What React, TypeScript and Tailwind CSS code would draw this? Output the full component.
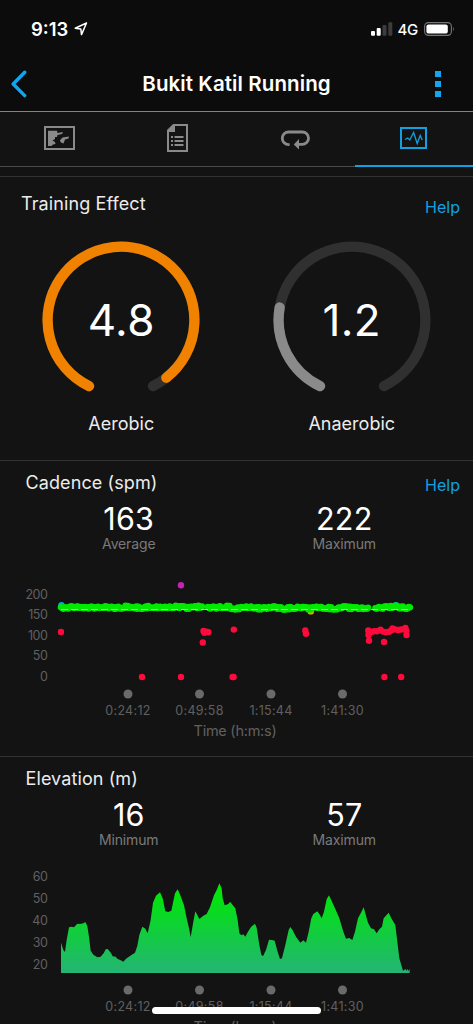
import { ReactNode } from 'react';

interface Point {
  x: number;
  y: number;
  color?: string;
}

interface StatProps {
  value: string;
  label: string;
}

const RED = '#ff0a3c';

const cadencePoints: Point[] = [
  { x: 61, y: 62 },
  { x: 142, y: 107 },
  { x: 181, y: 107 },
  { x: 203.5, y: 61 },
  { x: 204.5, y: 62.8 },
  { x: 206.5, y: 61.8 },
  { x: 208.3, y: 62.3 },
  { x: 202.8, y: 72.5 },
  { x: 233.8, y: 59.6 },
  { x: 232.6, y: 107 },
  { x: 233.6, y: 107 },
  { x: 305.3, y: 60.5 },
  { x: 306, y: 63.8 },
  { x: 368.3, y: 60.4 },
  { x: 368.5, y: 65 },
  { x: 369, y: 70.8 },
  { x: 371, y: 62 },
  { x: 374, y: 61.3 },
  { x: 377, y: 61.3 },
  { x: 380.5, y: 59.8 },
  { x: 383, y: 61.6 },
  { x: 386, y: 62.2 },
  { x: 389, y: 61.8 },
  { x: 391, y: 60.6 },
  { x: 392.6, y: 58.4 },
  { x: 395, y: 59.4 },
  { x: 398, y: 60 },
  { x: 401, y: 59.5 },
  { x: 405.4, y: 58 },
  { x: 406.4, y: 61 },
  { x: 406.5, y: 65 },
  { x: 384, y: 72 },
  { x: 384.4, y: 107 },
  { x: 401.2, y: 107 },
  { x: 181, y: 15.3, color: '#c822b4' },
  { x: 61.5, y: 35.2, color: '#00a8e8' },
  { x: 396, y: 35.3, color: '#00a8e8' },
  { x: 310.8, y: 41.4, color: '#ff9a00' },
];

// Steady running band, one sample every ~1.2px, with the two short pauses left out
const runningPoints: Point[] = Array.from({ length: 293 }, (_, i) => {
  const x = 61 + i * 1.195;
  const drift = x > 230 && x < 372 ? 37.9 : 37.3;
  const y = drift + Math.sin(i * i * 0.37) * 1.1 + Math.sin(i * 0.31) * 0.5;
  return { x, y };
}).filter(({ x }) => !(x > 202.5 && x < 207.8) && !(x > 368.3 && x < 374.2));

const elevationPath =
  'M183 669 L183 578 190 600 195 606 200 570 207 532 215 530 222 532 232 521 240 522 250 520 256 516 262 528 ' +
  '267 560 272 602 280 614 292 622 302 620 312 608 317 598 323 597 333 609 338 619 347 620 352 626 362 631 370 635 ' +
  '378 626 390 618 405 608 412 588 418 555 427 530 436 536 443 550 452 510 459 458 468 437 480 427 488 445 ' +
  '496 484 505 486 514 482 525 430 533 418 541 436 552 466 560 505 567 535 572 562 580 515 586 484 598 507 ' +
  '610 497 620 492 630 472 642 436 650 420 658 400 665 415 668 445 674 466 685 462 690 455 698 465 706 475 ' +
  '708 485 713 510 718 550 724 556 730 553 736 560 744 545 753 531 765 521 770 533 778 585 784 614 789 619 ' +
  '798 600 807 569 816 570 824 572 832 602 840 627 846 625 856 585 866 540 871 531 878 541 888 560 901 578 ' +
  '910 571 918 578 926 545 934 505 940 492 952 484 958 492 965 505 972 485 980 448 987 436 995 453 1006 477 ' +
  '1018 505 1030 545 1038 566 1048 564 1057 570 1065 545 1074 505 1083 488 1091 472 1098 497 1104 518 1113 535 ' +
  '1122 538 1130 550 1138 538 1146 530 1151 505 1166 488 1174 505 1186 525 1192 575 1198 625 1209 662 1213 660 ' +
  '1216 656 1219 663 1222 657 1226 663 1229 656 L1229 669 Z';

const timeTicks = [
  { x: 128, label: '0:24:12' },
  { x: 199.5, label: '0:49:58' },
  { x: 271, label: '1:15:44' },
  { x: 342.5, label: '1:41:30' },
];

// Angle is measured clockwise from the bottom of the circle
function pointAt(angle: number) {
  const rad = (angle * Math.PI) / 180;
  return `${79 - 73.4 * Math.sin(rad)} ${79 + 73.4 * Math.cos(rad)}`;
}

function arc(from: number, to: number) {
  return `M${pointAt(from)} A73.4 73.4 0 ${to - from > 180 ? 1 : 0} 1 ${pointAt(to)}`;
}

function Gauge({ value, label, color }: { value: number; label: string; color: string }) {
  const start = 25.8;
  const sweep = 308.4;

  return (
    <div className="flex flex-col items-center">
      <div className="grid h-[158px] w-[158px] place-items-center">
        <svg viewBox="0 0 158 158" className="col-start-1 row-start-1 h-[158px] w-[158px]" fill="none" strokeLinecap="round" strokeWidth="10.3">
          <path d={arc(start, start + sweep)} stroke="#303030" />
          <path d={arc(start, start + (sweep * value) / 5)} stroke={color} />
        </svg>
        <span className="col-start-1 row-start-1 text-[44px] leading-none tracking-[0.4px] text-white">{value.toFixed(1)}</span>
      </div>
      <span className="mt-[13px] text-[18px] leading-6">{label}</span>
    </div>
  );
}

function Stat({ value, label }: StatProps) {
  return (
    <div className="flex flex-col items-center">
      <span className="mt-px text-[30.5px] leading-8 tracking-[0.2px] text-white">{value}</span>
      <span className="mt-px text-[14px] leading-4 tracking-[-0.15px] text-[#7a7a7a]">{label}</span>
    </div>
  );
}

function TimeAxis() {
  return (
    <g fill="#606060" textAnchor="middle">
      {timeTicks.map((tick) => (
        <g key={tick.label}>
          <circle cx={tick.x} cy="124" r="4.5" fill="#6a6a6a" />
          <text x={tick.x} y="144.8" fontSize="12.5" letterSpacing="0.3">{tick.label}</text>
        </g>
      ))}
      <text x="235" y="165.8" fontSize="14.5" letterSpacing="-0.25">Time (h:m:s)</text>
    </g>
  );
}

function YAxis({ labels, first, step }: { labels: number[]; first: number; step: number }) {
  return (
    <g fill="#606060" textAnchor="end" fontSize="12.5" letterSpacing="-0.5">
      {labels.map((label, i) => (
        <text key={label} x="47.3" y={first + i * step + 4.5}>{label}</text>
      ))}
    </g>
  );
}

interface ChartSectionProps {
  title: string;
  stats: StatProps[];
  help?: boolean;
  children: ReactNode;
}

function ChartSection({ title, stats, help = false, children }: ChartSectionProps) {
  return (
    <section className="h-[296px] shrink-0 border-t border-[#333]">
      <div className="flex h-[41px] items-start justify-between pl-[25.5px] pr-[13px] pt-2.5">
        <h2 className="text-[18px] leading-6 tracking-[0.1px]">{title}</h2>
        {help && <button className="mt-[2px] text-[16px] leading-6 text-[#11a0e0]">Help</button>}
      </div>
      <div className="grid h-[68px] grid-cols-2 px-[21px]">
        {stats.map((stat) => (
          <Stat key={stat.label} {...stat} />
        ))}
      </div>
      <svg width="473" height="186" viewBox="0 0 473 186" className="block">
        {children}
        <TimeAxis />
      </svg>
    </section>
  );
}

function StatusBar() {
  return (
    <div className="flex h-[56px] items-center justify-between pl-[31px] pr-[18px] pt-0.5 text-white">
      <div className="flex items-center gap-1.5">
        <span className="text-[18.5px] font-semibold leading-6">9:13</span>
        <svg width="14" height="14" viewBox="0 0 14 14" fill="none" stroke="white" strokeWidth="1.5" strokeLinejoin="round">
          <path d="M12.5 1 L1.2 6.2 L6.8 6.9 L7.5 12.6 Z" />
        </svg>
      </div>
      <div className="flex items-center">
        <svg width="22" height="14" viewBox="0 0 22 14">
          <rect x="0" y="9" width="4" height="4.7" rx="1" fill="white" />
          <rect x="5.7" y="6" width="4" height="7.7" rx="1" fill="white" />
          <rect x="11.5" y="3" width="4" height="10.7" rx="1" fill="#3c3c3c" />
          <rect x="17.3" y="0.3" width="4" height="13.4" rx="1" fill="#3c3c3c" />
        </svg>
        <span className="ml-[5px] mr-1.5 mt-0.5 text-[15px] font-medium leading-5 tracking-[-0.3px]">4G</span>
        <svg width="31" height="14" viewBox="0 0 31 14">
          <rect x="0.6" y="0.6" width="26.8" height="12.8" rx="3.8" fill="none" stroke="#777" strokeWidth="1.1" />
          <rect x="2.4" y="2.4" width="21.4" height="9.2" rx="2.2" fill="white" />
          <path d="M29 4.8 Q30.8 7 29 9.2 Z" fill="#777" />
        </svg>
      </div>
    </div>
  );
}

function TabBar() {
  return (
    <nav className="grid h-[55px] shrink-0 grid-cols-4">
      <button className="flex items-start justify-center border-b border-[#4a4a4a] pt-[14px]">
        <svg width="31" height="24" viewBox="0 0 31 24">
          <rect x="1" y="1" width="29" height="22" fill="none" stroke="#8a8a8a" strokeWidth="2" />
          <path fill="#8a8a8a" d="M4 4.7 H13 L13.5 7 L19 6 L18 8 L13.5 9 L13 11 H11 V13 L8.5 14.5 L11 16 L11.5 18 L9 18.5 L7.5 20 H4 Z M25 10.5 L24.5 12.5 L21 13.5 L19.5 17.5 L17 16.5 L15.8 14.5 L18.5 11.5 Z" />
        </svg>
      </button>
      <button className="flex items-start justify-center border-b border-[#4a4a4a] pt-3">
        <svg width="21" height="28" viewBox="0 0 21 28">
          <path fill="none" stroke="#8a8a8a" strokeWidth="2" d="M6.5 1 H20 V27 H1 V6.5 Z" />
          <path fill="#8a8a8a" d="M1 7 L7 1 H8 V8 H1 Z M4 12 h2 v2 h-2 Z M4 16 h2 v2 h-2 Z M4 20 h2 v2 h-2 Z M7.5 12 h9 v2 h-9 Z M7.5 16 h9 v2 h-9 Z M7.5 20 h9 v2 h-9 Z" />
        </svg>
      </button>
      <button className="flex items-start justify-center border-b border-[#4a4a4a] pt-[18px]">
        <svg width="29" height="20" viewBox="0 0 29 20">
          <path fill="none" stroke="#8a8a8a" strokeWidth="2.8" d="M8.6 14.6 H7.6 A6.1 6.1 0 0 1 7.6 2 H21.3 A6.1 6.1 0 0 1 21.3 14.4 H17" />
          <path fill="#8a8a8a" d="M12.8 14.4 L18 9 V19.6 Z" />
        </svg>
      </button>
      <button className="flex items-start justify-center border-b-2 border-[#11a0e0] pt-[15px]">
        <svg width="27" height="22" viewBox="0 0 27 22" fill="none" stroke="#11a0e0">
          <rect x="1" y="1" width="25" height="20" strokeWidth="2" />
          <path d="M5 12.5 L7.8 11 L9.8 13 L13.6 5.5 L17.2 16.5 L20.2 8.5 L22.3 13" strokeWidth="1.3" />
        </svg>
      </button>
    </nav>
  );
}

export default function App() {
  return (
    <main className="relative flex h-[1024px] w-[473px] flex-col overflow-hidden bg-[#131313] font-['Inter','Liberation_Sans',sans-serif] text-[#ececec]">
      <header className="h-[111px] shrink-0 bg-[#0c0c0c]">
        <StatusBar />
        <div className="grid h-[55px] grid-cols-[1fr_auto_1fr] items-center pl-[11px] pr-[11px]">
          <svg width="16" height="28" viewBox="0 0 16 28" fill="none" stroke="#11a7f0" strokeWidth="3.4" strokeLinecap="round" strokeLinejoin="round">
            <path d="M13.7 2.2 L2.2 14 L13.7 25.6" />
          </svg>
          <h1 className="text-[20.5px] font-semibold leading-6 tracking-[0.1px] text-white">Bukit Katil Running</h1>
          <svg width="6" height="26" viewBox="0 0 6 26" fill="#11a7f0" className="mr-[21px] justify-self-end">
            <rect y="0" width="6" height="6" />
            <rect y="10" width="6" height="6" />
            <rect y="20" width="6" height="6" />
          </svg>
        </div>
      </header>
      <div className="h-px shrink-0 bg-[#11a7f0]" />

      <TabBar />

      <section className="mt-[9px] h-[284px] shrink-0 border-t border-[#333]">
        <div className="flex h-[64px] items-start justify-between pl-[21px] pr-[13px] pt-[15px]">
          <h2 className="text-[18px] leading-6 tracking-[0.1px]">Training Effect</h2>
          <button className="mt-[3px] text-[16px] leading-6 text-[#11a0e0]">Help</button>
        </div>
        <div className="grid grid-cols-2 px-1.5">
          <Gauge value={4.8} label="Aerobic" color="#f08200" />
          <Gauge value={1.2} label="Anaerobic" color="#8a8a8a" />
        </div>
      </section>

      <ChartSection
        title="Cadence (spm)"
        help
        stats={[
          { value: '163', label: 'Average' },
          { value: '222', label: 'Maximum' },
        ]}
      >
        <YAxis labels={[200, 150, 100, 50, 0]} first={24.3} step={20.5} />
        {cadencePoints.map((point, i) => (
          <circle key={i} cx={point.x} cy={point.y} r="3.2" fill={point.color ?? RED} />
        ))}
        {runningPoints.map((point, i) => (
          <circle key={i} cx={point.x} cy={point.y} r="3.2" fill="#00ea00" />
        ))}
        <path d="M61 39.5 H410" stroke="white" strokeOpacity="0.65" strokeDasharray="7 3" />
      </ChartSection>

      <ChartSection
        title="Elevation (m)"
        stats={[
          { value: '16', label: 'Minimum' },
          { value: '57', label: 'Maximum' },
        ]}
      >
        <defs>
          <linearGradient id="elevation" x1="0" y1="0" x2="0" y2="1">
            <stop offset="0" stopColor="#00e800" />
            <stop offset="0.2" stopColor="#04e014" />
            <stop offset="1" stopColor="#24b474" />
          </linearGradient>
        </defs>
        <YAxis labels={[60, 50, 40, 30, 20]} first={10} step={22} />
        <path d={elevationPath} transform="translate(0 -116) scale(0.33333)" fill="url(#elevation)" />
      </ChartSection>

      <div className="absolute bottom-[10px] left-[152px] h-[7px] w-[169px] rounded-full bg-white" />
    </main>
  );
}
